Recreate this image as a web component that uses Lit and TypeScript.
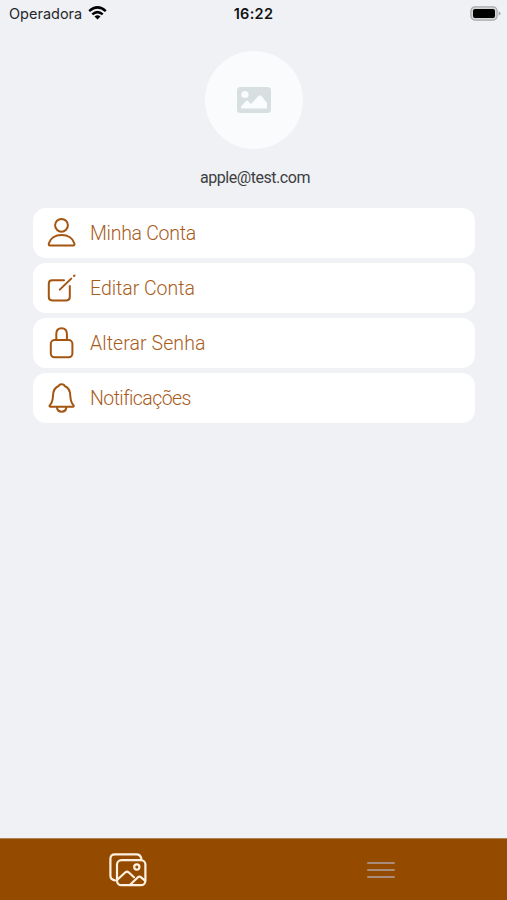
import { LitElement, html, css, svg } from "lit";
import { customElement } from "lit/decorators.js";

const icons = {
  user: svg`<circle cx="14.5" cy="9.3" r="6.4"/><path d="M1.8 27.4v1.2q0 1 1 1h23.6q1 0 1-1v-1.2C26 22.4 21 19 14.6 19S3.2 22.4 1.8 27.4z"/>`,
  edit: svg`<path d="M17 9.3H5.2Q1.8 9.3 1.8 12.7V26Q1.8 29.4 5.2 29.4H19.4Q22.8 29.4 22.8 26V15M12.8 18.6 24.2 7.6M27 5l.5-.5"/>`,
  lock: svg`<rect x="3.8" y="14" width="21.6" height="17.3" rx="3.8"/><path d="M9.3 14V8Q9.3 2.3 14.6 2.3T19.9 8V14"/>`,
  bell: svg`<path d="M3 25.7H26.2Q27.2 25.1 26.4 24.2C24.2 21.7 23.6 20.3 23.3 14.7C23 9.1 21.5 6.3 17.7 5C17 2.6 12.4 2.6 11.6 5C7.8 6.3 6.3 9.1 6 14.7C5.7 20.3 5.1 21.7 2.9 24.2Q2 25.1 3 25.7zM9.8 26Q10.5 30.7 14.7 30.7T19.5 26"/>`,
};

const items = [
  { label: "Minha Conta", icon: icons.user, spacing: -0.28 },
  { label: "Editar Conta", icon: icons.edit, spacing: -0.03 },
  { label: "Alterar Senha", icon: icons.lock, spacing: 0.08 },
  { label: "Notificações", icon: icons.bell, spacing: -0.57 },
];

@customElement("app-root")
export class AppRoot extends LitElement {
  static styles = css`
    :host {
      display: flex;
      flex-direction: column;
      height: 100vh;
      background: #eff1f5;
      font-family: Roboto, "Liberation Sans", sans-serif;
    }
    svg { display: block; flex: none; }
    .status {
      height: 28px;
      box-sizing: border-box;
      display: grid;
      grid-template-columns: 1fr auto 1fr;
      align-items: center;
      padding: 0 6px 0 9px;
      font: 400 14.5px/28px Inter, sans-serif;
      color: #26272a;
    }
    .carrier { display: flex; align-items: center; gap: 6px; }
    .carrier svg, .battery { margin-bottom: 2px; }
    .time { font-weight: 600; color: #111; letter-spacing: 0.3px; margin-right: 3px; }
    .battery { justify-self: end; }
    main { flex: 1; display: flex; flex-direction: column; align-items: center; }
    .avatar {
      width: 98px;
      height: 98px;
      margin-top: 23px;
      border-radius: 50%;
      background: #f9fbfc;
      display: grid;
      place-items: center;
    }
    .email {
      margin: 18px 0 0 3px;
      font-size: 16px;
      line-height: 21px;
      color: #3d3e42;
      letter-spacing: -0.45px;
    }
    .menu {
      align-self: stretch;
      margin: 20px 32px 0 33px;
      display: flex;
      flex-direction: column;
      gap: 5px;
    }
    .item {
      height: 50px;
      box-sizing: border-box;
      border-radius: 13px;
      background: #fff;
      display: flex;
      align-items: center;
      gap: 14px;
      padding: 0 14px;
      color: #a85c1c;
      font-weight: 300;
      font-size: 19.5px;
    }
    .item svg {
      fill: none;
      stroke: #a45510;
      stroke-width: 2;
      stroke-linecap: round;
      stroke-linejoin: round;
    }
    .tabs {
      height: 62px;
      box-sizing: border-box;
      background: #944b00;
      border-top: 1px solid #b18255;
      display: grid;
      grid-template-columns: 1fr 1fr;
      place-items: center;
      padding-left: 2px;
    }
    .tabs svg { fill: none; stroke-linecap: round; stroke-linejoin: round; }
    .gallery { stroke: #fff1e2; stroke-width: 2.2; }
    .lines { stroke: #a98c7c; stroke-width: 2; }
  `;

  render() {
    return html`
      <header class="status">
        <span class="carrier">Operadora
          <svg width="19" height="14" viewBox="0 0 19 14" fill="none" stroke="#000" stroke-width="2.5">
            <path d="M1.2 5.1Q9.5-2.3 17.8 5.1M4.3 8.4Q9.5 3.8 14.7 8.4"/>
            <path d="M6.5 10.4Q9.5 8 12.5 10.4L9.5 13.4z" fill="#000" stroke="none"/>
          </svg>
        </span>
        <span class="time">16:22</span>
        <svg class="battery" width="31" height="15" viewBox="0 0 31 15">
          <rect x=".9" y=".9" width="26.2" height="13.2" rx="4" fill="#d4d5d6" stroke="#a6a8aa" stroke-width="1.2"/>
          <rect x="3" y="3" width="22" height="9" rx="2" fill="#000"/>
          <path d="M28.6 5.2q2 .7 2 2.3t-2 2.3z" fill="#a6a8aa"/>
        </svg>
      </header>
      <main>
        <div class="avatar">
          <svg width="34" height="26" viewBox="0 0 34 26">
            <rect width="34" height="26" rx="3.5" fill="#d8dfe0"/>
            <circle cx="8" cy="7.5" r="3.6" fill="#f9fbfc"/>
            <path d="M4 21.5v-2l5-5.5q1-1 2 0l3 3 7.5-8q1.5-1.4 3 0L30 16v5.5z" fill="#f9fbfc"/>
          </svg>
        </div>
        <div class="email">apple@test.com</div>
        <nav class="menu">
          ${items.map(
            (i) => html`<div class="item">
              <svg width="29" height="34" viewBox="0 0 29 34">${i.icon}</svg>
              <span style="letter-spacing:${i.spacing}px">${i.label}</span>
            </div>`
          )}
        </nav>
      </main>
      <footer class="tabs">
        <svg class="gallery" width="38" height="34" viewBox="0 0 38 34">
          <path d="M6 27.4Q1.4 26.5 1.4 22.5V6Q1.4 1.4 6 1.4H27.5Q31.5 1.4 32.4 5.8"/>
          <rect x="8" y="7.2" width="28.4" height="25" rx="4.5"/>
          <circle cx="27.8" cy="14" r="2.6"/>
          <path d="M8.3 26.8 16.4 19.3Q18 18 19.6 19.3L25 24.3M20.8 32 29 24.2Q30.4 23 31.8 24.2L36 27.7"/>
        </svg>
        <svg class="lines" width="28" height="18" viewBox="0 0 28 18">
          <path d="M1 2H27M1 9H27M1 16H27"/>
        </svg>
      </footer>
    `;
  }
}
